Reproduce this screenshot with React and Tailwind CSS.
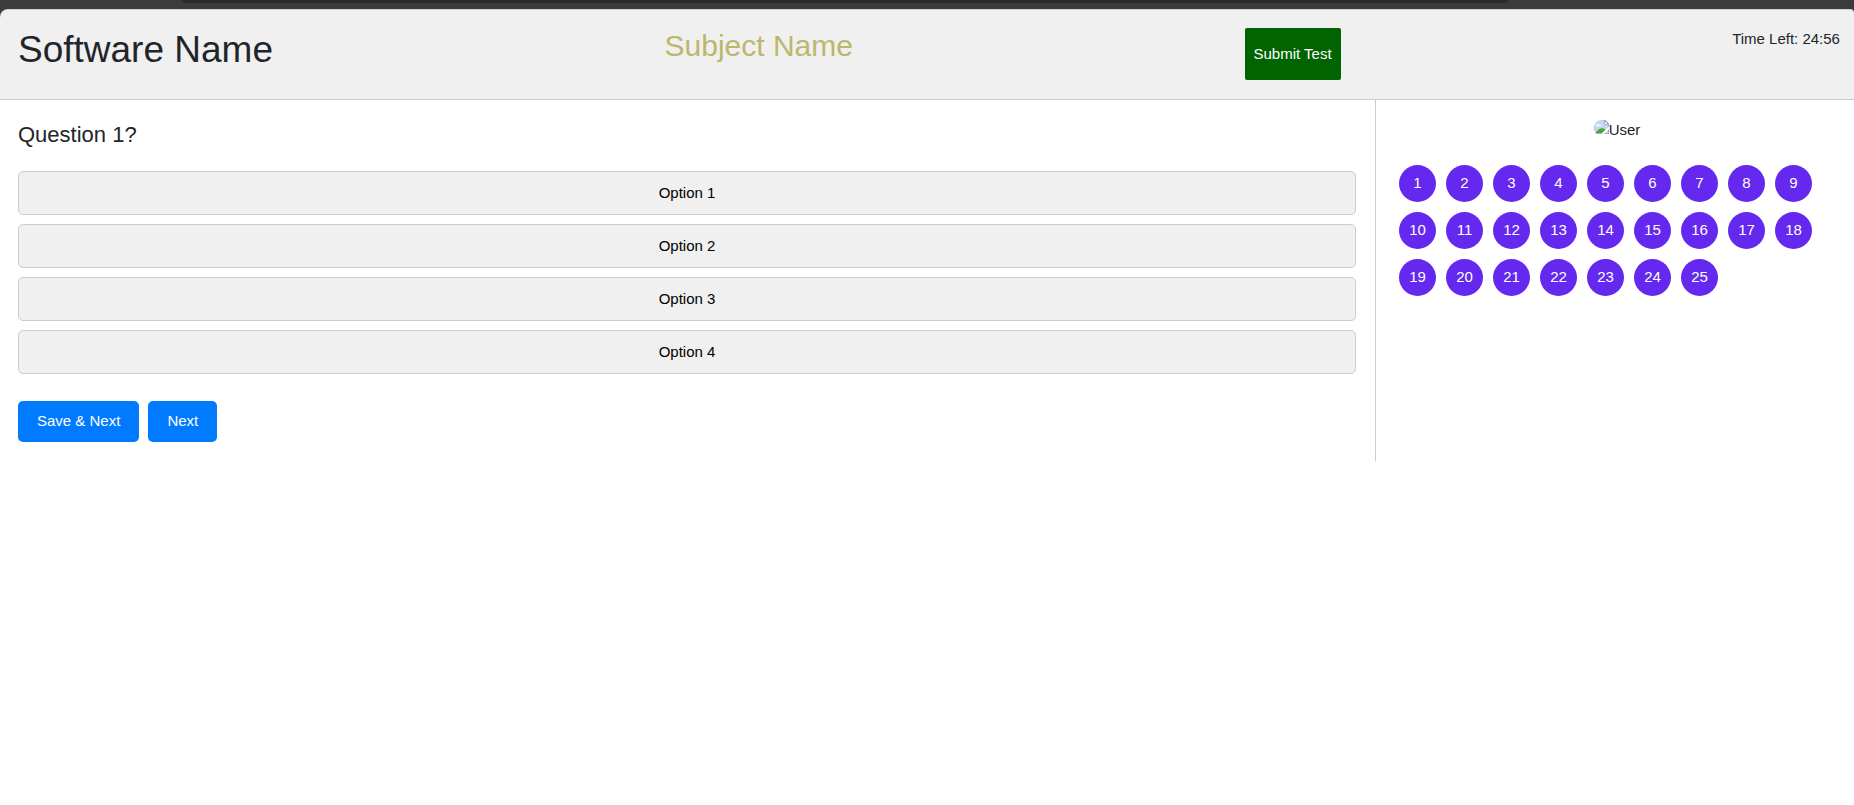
import React, { useState } from "react";

const options = ["Option 1", "Option 2", "Option 3", "Option 4"];
const questions = Array.from({ length: 25 }, (_, i) => i + 1);

function MissingImage() {
  return (
    <svg width="15" height="16" viewBox="0 0 15 16" aria-hidden="true">
      <defs>
        <clipPath id="avatar-shape">
          <path d="M6 1H11L15 5V15H3C1.2 14.2 0 12 0 9.500C0 5.500 2 2.500 6 1Z" />
        </clipPath>
      </defs>
      <g clipPath="url(#avatar-shape)">
        <rect width="15" height="16" fill="#c3d5f3" />
        <path d="M1 6.500C2 4.500 4 4 5 5C7 4.500 8 6 7 7.500H1Z" fill="#e6effb" />
        <path d="M1 15C3 11 6 9 8.500 9.300C10.500 9.500 11.500 11 12 11.500L8.500 15Z" fill="#4fa53b" />
        <path d="M15 7.500V10.500L10.500 15H7L15 7.500Z" fill="#ffffff" />
        <path d="M0 14.500H8M10.500 14.500H15" stroke="#a9afb4" />
      </g>
      <path d="M0.500 11.500C0 8 1 5 3 3" fill="none" stroke="#b9c0ca" strokeWidth="0.8" />
      <path d="M9.500 1.500H11.500L14.500 4.500V7.500M14.500 10.500V14.500" fill="none" stroke="#a1a7ac" />
      <path d="M10.500 1.500V5.500H14.500Z" fill="#f4f4f4" stroke="#a1a7ac" strokeWidth="0.8" />
    </svg>
  );
}

function Header() {
  return (
    <header className="flex min-h-[91px] items-start justify-between rounded-tl-lg rounded-tr border-y border-t-[#d2d2d2] border-b-[#cccccc] bg-[#f0f0f0] pt-[18px] pr-[14px] pl-[18px]">
      <h1 className="text-[37px] leading-[44px]">Software Name</h1>
      <h2 className="text-[30px] leading-9 text-[#bdb76b]">Subject Name</h2>
      <button
        type="button"
        className="h-[52px] rounded-xs bg-[#006400] px-[9px] text-[15px] text-white"
      >
        Submit Test
      </button>
      <p className="text-[15px] leading-[22px]">Time Left: 24:56</p>
    </header>
  );
}

export default function App() {
  const [, setCurrent] = useState(1);

  return (
    <div className="min-h-screen bg-white font-['Liberation_Sans',Arial,sans-serif] text-[15px] text-[#212529]">
      <div className="bg-[#3b3b3b]">
        <div className="h-[9px] pr-[346px] pl-[182px]">
          <div className="h-[3px] rounded-b-lg bg-[#292929]" />
        </div>
        <Header />
      </div>

      <div className="flex">
        <main className="min-w-0 flex-1 pt-[21px] pr-[19px] pb-[19px] pl-[18px]">
          <h3 className="text-[22px] leading-7">Question 1?</h3>
          <div className="mt-[22px] flex flex-col gap-[9px]">
            {options.map((label) => (
              <button
                key={label}
                type="button"
                className="h-11 rounded-[5px] border border-[#cccccc] bg-[#f0f0f0] text-black"
              >
                {label}
              </button>
            ))}
          </div>
          <div className="mt-[27px] flex gap-[9px]">
            <button type="button" className="h-[41px] rounded-[5px] bg-[#007bff] px-[19px] text-white">
              Save &amp; Next
            </button>
            <button type="button" className="h-[41px] rounded-[5px] bg-[#007bff] px-[19px] text-white">
              Next
            </button>
          </div>
        </main>

        <aside className="w-[479px] shrink-0 border-l border-[#cccccc] px-[23px] pt-[19px]">
          <div className="flex h-[22px] items-start justify-center pl-[4px]">
            <MissingImage />
            <span className="leading-[22px]">User</span>
          </div>
          <nav aria-label="Questions" className="mt-6 flex flex-wrap gap-[10px]">
            {questions.map((n) => (
              <button
                key={n}
                type="button"
                onClick={() => setCurrent(n)}
                className="size-[37px] rounded-full bg-[#6528ee] text-white"
              >
                {n}
              </button>
            ))}
          </nav>
        </aside>
      </div>
    </div>
  );
}
